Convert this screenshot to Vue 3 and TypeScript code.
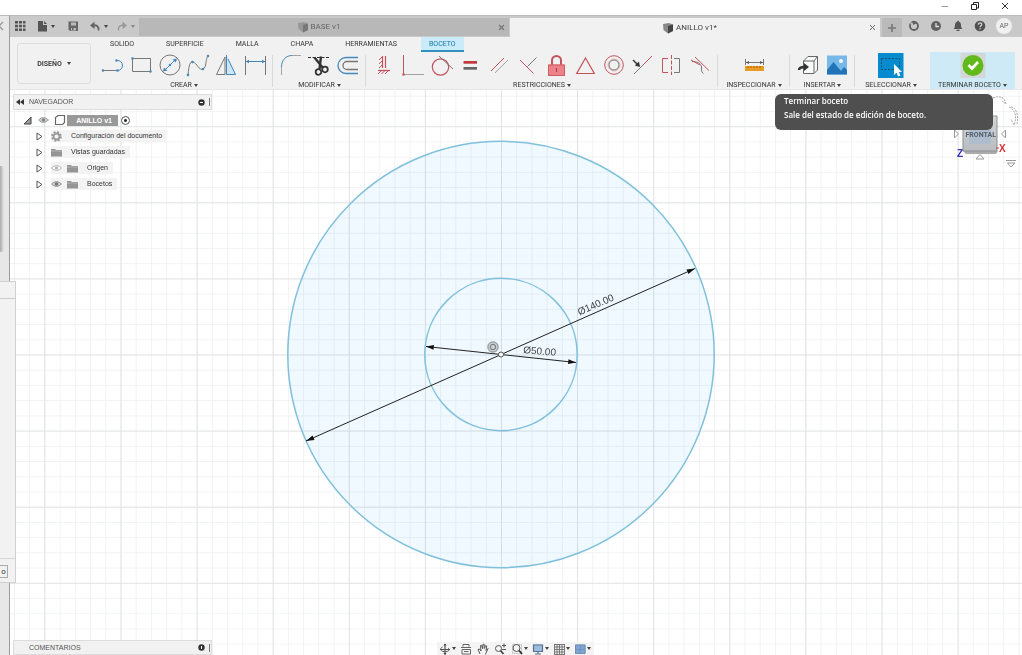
<script setup lang="ts">
import { ref } from 'vue'

interface Shape { d: string; s?: string; f?: string; w?: number; dash?: string }
interface Tool { name: string; shapes: Shape[] }
interface Group { id: string; label: string; tools: Tool[] }

const RED = '#c4525b'
const BLUE = '#4488bd'
const GREY = '#777'
const LIGHT = '#a3a3a3'
const DARK = '#333'

const disc = (x: number, y: number, r: number): string =>
  `M${x - r} ${y}a${r} ${r} 0 1 0 ${2 * r} 0a${r} ${r} 0 1 0 ${-2 * r} 0z`
const line = (d: string, s: string, w = 1, dash?: string): Shape => ({ d, s, w, dash })
const fill = (d: string, f: string): Shape => ({ d, f })
const dot = (x: number, y: number, f = BLUE): Shape => fill(disc(x, y, 1.3), f)
const ring = (x: number, y: number, r: number, s: string, w = 1): Shape => line(disc(x, y, r), s, w)

const groups: Group[] = [
  {
    id: 'crear', label: 'CREAR', tools: [
      { name: 'Línea', shapes: [line('M2 17.5H17', GREY), line('M17 17.5A5 5 0 0 0 16 7.5', BLUE), dot(2, 17.5), dot(16.5, 17.5), dot(15.5, 7.5)] },
      { name: 'Rectángulo', shapes: [line('M3 5.5H21.5V18.5H3.5V5', GREY), dot(3.5, 5.5), dot(21.5, 18.5)] },
      { name: 'Círculo', shapes: [ring(12, 12, 10, GREY), line('M7 17L17 7', BLUE), dot(12, 12), fill('M5 18.5L6 14.5L9.5 17.5zM19 5.5L17.8 9.5L14.5 6.5z', BLUE)] },
      { name: 'Spline', shapes: [line('M2 22C3 12 4 8 7 9C11 10 13 18 17 16C21 14 19 7 22 3', GREY), dot(2, 22), dot(6.5, 9), dot(17, 16), dot(22, 3)] },
      { name: 'Simetría', shapes: [fill('M13 3L22 21.5H13z', '#cfe5f5'), line('M11 4V21.5H2.5z', GREY), line('M14 6L21.5 21.5H12', BLUE), line('M12.5 2V22', BLUE)] },
      { name: 'Cota', shapes: [line('M2.5 3V22M22.5 3V22', GREY), line('M3 8.5H22', BLUE), fill('M2.5 8.5L6 6.8V10.2zM22.5 8.5L19 6.8V10.2z', BLUE)] },
    ],
  },
  {
    id: 'modificar', label: 'MODIFICAR', tools: [
      { name: 'Empalme', shapes: [line('M2.5 22V14M13 2.5H22', LIGHT), line('M2.5 14C2.5 7 7 2.5 13 2.5', BLUE)] },
      { name: 'Recortar', shapes: [line('M1 4.5H23', DARK, 1, '3 1.5'), line('M7.5 4.5L16 15M14 3.5L12.5 16', DARK, 2.4), ring(11.5, 19, 2.8, DARK, 1.8), ring(18, 16.5, 2.8, DARK, 1.8)] },
      { name: 'Desfase', shapes: [line('M22 4.5H10A7.5 7.5 0 0 0 10 20.5H22', BLUE, 1.3), line('M22 8.5H11A4 4 0 0 0 11 16.5H22', GREY, 1.3)] },
    ],
  },
  {
    id: 'restricciones', label: 'RESTRICCIONES', tools: [
      { name: 'Horizontal/Vertical', shapes: [line('M13.5 3V15M10.5 3V15', RED, 1.2), line('M7 7L10 4M7 11L10 8M7 15L10 12', RED), line('M6 17.5H18', RED, 1.3), line('M6 21L9 18M9.5 21L12.5 18M13 21L16 18', RED)] },
      { name: 'Coincidente', shapes: [line('M2.5 2V22', RED), line('M3 21.5H23', LIGHT), dot(2.5, 21.5, RED)] },
      { name: 'Tangente', shapes: [ring(10.5, 14, 8.2, RED, 1.2), line('M9 3L23 16', GREY)] },
      { name: 'Igual', shapes: [fill('M5.5 8H19V10.7H5.5z', '#c23a40'), fill('M5.5 14H19V16.7H5.5z', '#666')] },
      { name: 'Paralelo', shapes: [line('M4 18L17 5', RED), line('M8 20L21 7', LIGHT)] },
      { name: 'Perpendicular', shapes: [line('M4 7L17.5 20.5', RED), line('M20.5 4.5L11.5 13.5', GREY)] },
      { name: 'Fijar', shapes: [line('M8 12V7.5a4.5 4.5 0 0 1 9 0V12', '#c2535a', 2), fill('M4 11.5H21V23H4z', '#ec8288'), line('M4.5 12H20.5V22.5H4.5z', '#cf5a62'), line('M12.5 15V19', '#a7373f')] },
      { name: 'Punto medio', shapes: [line('M12.5 5L21.3 20.5H3.7z', RED, 1.2)] },
      { name: 'Concéntrico', shapes: [ring(12, 12, 9.3, RED), ring(12, 12, 5, GREY), ring(12, 12, 6, '#d58b92', 0.6)] },
      { name: 'Colineal', shapes: [line('M4 21L13 12', GREY), line('M13 12L22 3', RED), line('M3 7L8 12', DARK, 1.4), fill('M10 14L9 8.5L4.8 12.5z', DARK)] },
      { name: 'Simétrica', shapes: [line('M9 5.5H3.5V19.5H9', RED), line('M12.5 2V22', RED, 1, '4 1.5'), line('M15 5.5H20.5V19.5H15', GREY)] },
      { name: 'Curvatura', shapes: [line('M7 4L21 17.5', RED), line('M4 8.5C9 8.5 13 10 13.5 14C13.5 17 13 19 15.5 20.5', GREY), line('M3 7L12 12', RED)] },
    ],
  },
  {
    id: 'inspeccionar', label: 'INSPECCIONAR', tools: [
      { name: 'Medir', shapes: [line('M3.5 6V12M21.5 6V12M4 9.5H21', '#777'), fill('M4 9.5L7 8V11zM21 9.5L18 8V11z', '#555'), fill('M3 13H22V18H3z', '#e79c25'), line('M6 13V15M9 13V15M12 13V15M15 13V15M18 13V15', '#a96905')] },
    ],
  },
  {
    id: 'insertar', label: 'INSERTAR', tools: [
      { name: 'Insertar derivada', shapes: [fill('M7 8L12 3H22V17L18 21H7z', '#f8f9fb'), line('M7.5 8L12 3.5H21.5V17L18 20.5H7.5zM7.5 8H18V20M18 8L21.5 3.5', '#666'), line('M3 17C3 14.5 5 14 9 14', DARK, 2.5), fill('M8 10L13 14L8 18z', DARK)] },
      { name: 'Insertar imagen', shapes: [fill('M2 2.5H22V21.5H2z', '#76b8e8'), fill('M2 17L8.5 9L16 18L19 14L22 17V21.5H2z', '#2273b8'), fill(disc(16, 8, 2), '#f2faff')] },
    ],
  },
  {
    id: 'seleccionar', label: 'SELECCIONAR', tools: [
      { name: 'Seleccionar', shapes: [fill('M-1 0H24.5V25H-1z', '#078bcf'), line('M2.5 5.5H20.5V16.5H2.5z', '#164f70', 1, '2 1.5'), fill('M15 11V22L17.5 19.8L19.2 23.5L21.5 22.5L19.8 19H23z', '#fff')] },
    ],
  },
  {
    id: 'terminar', label: 'TERMINAR BOCETO', tools: [
      { name: 'Terminar boceto', shapes: [fill('M-.5 0H24.5V25H-.5z', '#d2d7d7'), fill(disc(12, 12.5, 10.5), '#62b91c'), line('M7.5 12L11 15.5L17 9', '#fff', 2.6)] },
    ],
  },
]

const ribbonTabs = ['SOLIDO', 'SUPERFICIE', 'MALLA', 'CHAPA', 'HERRAMIENTAS', 'BOCETO']
const activeTab = ref('BOCETO')

interface Node { label: string; icon: 'gear' | 'folder'; eye?: 'on' | 'off' }
const nodes: Node[] = [
  { label: 'Configuración del documento', icon: 'gear' },
  { label: 'Vistas guardadas', icon: 'folder' },
  { label: 'Origen', icon: 'folder', eye: 'off' },
  { label: 'Bocetos', icon: 'folder', eye: 'on' },
]

const quick: { name: string; caret: boolean; faded?: boolean; shapes: Shape[] }[] = [
  { name: 'Panel de datos', caret: false, shapes: [fill('M1 1h3v2.6H1zM5 1h3v2.6H5zM9 1h2.500v2.6H9zM1 4.700h3v2.6H1zM5 4.700h3v2.6H5zM9 4.700h2.500v2.6H9zM1 8.400h3v2.600H1zM5 8.400h3v2.600H5zM9 8.400h2.500v2.600H9z', '#555')] },
  { name: 'Archivo', caret: true, shapes: [fill('M2 1H7V5H11V11.5H2z', '#555'), fill('M8 1L11 4H8z', '#555')] },
  { name: 'Guardar', caret: false, shapes: [fill('M2 1.5H11V11H3L1.5 9.5V1.5z', '#666'), fill('M4 2.5H9V5.5H4zM4 8H9V10.5H4z', '#bbb'), fill('M5 8H6.5V10H5z', '#666')] },
  { name: 'Deshacer', caret: true, shapes: [fill('M1 5.5L5.5 1.5V9z', '#666'), line('M4 5.3C8 5 10 6.5 9.5 10.5', '#666', 1.8)] },
  { name: 'Rehacer', caret: true, faded: true, shapes: [fill('M11 5.5L6.5 1.5V9z', '#999'), line('M8 5.3C4 5 2 6.5 2.5 10.5', '#999', 1.4)] },
]

const status: { name: string; shapes: Shape[] }[] = [
  { name: 'Extensiones', shapes: [ring(6, 6, 4, '#606060', 1.8), fill('M5 0.5L9 3L5 5z', '#606060'), fill('M2 2L5 3L3 5z', '#c8c8c8')] },
  { name: 'Estado de trabajos', shapes: [fill(disc(6, 6, 5), '#606060'), line('M6 3V6.5H9', '#ddd', 1.3)] },
  { name: 'Notificaciones', shapes: [fill('M1.5 9C3 8 3 6 3 4.5C3.3 2.5 4.5 2 5.2 1.8V.8H6.8V1.8C8 2 8.8 3 9 4.5C9 6 9 8 10.5 9zM4.5 9.7H7.5V11H4.5z', '#555')] },
  { name: 'Ayuda', shapes: [fill(disc(6, 6, 5.3), '#505050'), line('M4.2 4.7C4.2 2.3 7.8 2.3 7.8 4.5C7.8 5.7 6 5.8 6 7.3M6 8.2V9.5', '#ddd', 1.2)] },
]

const views: { name: string; caret: boolean; shapes: Shape[] }[] = [
  { name: 'Órbita', caret: true, shapes: [line('M6 1V11.5M1 6.5H11', '#555', 1.2), line('M3.5 4C1 5 1 8 5 8.7C9 9 12 7 9 5', '#555'), fill('M4.5 2.5L6 .5L7.5 2.5zM4.5 10L6 12L7.5 10z', '#444')] },
  { name: 'Mirar a', caret: false, shapes: [line('M3 3.5V1.5H9V3.5M1 4.5H11M2 6.5H10.5V11H2zM4 8.5H8.5', '#666')] },
  { name: 'Encuadre', caret: false, shapes: [line('M3 11L1 6.5L2.5 6L4 8L3.5 2.5L4.7 2.3L5.5 5.5L6 1.2L7.2 1.3L7.3 5.5L8.7 2.5L9.7 3L9 7.5L11 5.5L9 10L8.5 11.5', '#555')] },
  { name: 'Zoom', caret: false, shapes: [ring(4.5, 5.5, 3, '#555'), line('M6.5 7.5L9.5 11', '#444', 1.8), line('M8 2.5H12M10 .5V4.5M8 6.5H12', '#555')] },
  { name: 'Ajustar', caret: true, shapes: [line('M1.5 1.5H10.5V10.5H1.5z', '#bbb', 1, '2 1'), ring(5.5, 5, 3.5, '#555'), line('M8 7.5L11 11', '#333', 1.8)] },
  { name: 'Visualización', caret: true, shapes: [fill('M1 1.5H11V8.5H1z', '#9dbce2'), line('M1.5 2H10.5V8.5H1.5zM3 11H9M6 9V11', '#5d708c', 1.2)] },
  { name: 'Rejilla', caret: true, shapes: [line('M1.5 1V11.5M4 1V11.5M6.5 1V11.5M9 1V11.5M11.5 1V11.5M1 1.5H12M1 4H12M1 6.5H12M1 9H12M1 11.5H12', '#777')] },
  { name: 'Ventanas gráficas', caret: true, shapes: [fill('M1 1.5H11.5V10.5H1z', '#7fa6d2'), line('M1.5 2H11V10.5H1.5z', '#6f8fb5'), line('M6.2 2V10M1 6.5H11', '#6f94c0')] },
]
</script>

<template>
  <div class="window">
    <header class="titlebar">
      <button aria-label="Minimizar"><svg width="10" height="10"><path d="M1.5 5.5H8" stroke="#999" /></svg></button>
      <button aria-label="Restaurar"><svg width="10" height="10"><path d="M1.500 3.500H6.500V8.500H1.500zM3.500 3V1.500H8.500V7H7" fill="none" stroke="#222" /></svg></button>
      <button aria-label="Cerrar"><svg width="10" height="10"><path d="M2 2L8 8M8 2L2 8" stroke="#333" /></svg></button>
    </header>

    <div class="body">
      <aside class="strip">
        <svg class="back" width="9" height="12"><path d="M3 2L-1 6L3 10" fill="none" stroke="#999" stroke-width="1.3" /></svg>
        <div class="strip-shadow"></div>
      </aside>

      <main class="app">
        <div class="tabbar">
          <div class="quick">
            <button v-for="q in quick" :key="q.name" :aria-label="q.name" :class="{ faded: q.faded }">
              <svg width="12" height="12">
                <path v-for="(p, i) in q.shapes" :key="i" :d="p.d" :fill="p.f ?? 'none'" :stroke="p.s" :stroke-width="p.w" />
              </svg>
              <i v-if="q.caret" class="caret"></i>
            </button>
          </div>
          <div class="doc">
            <svg width="12" height="12"><path d="M1 2L7 1L11 2.5V9L6 11.5L1.5 8z" fill="#989898" /><path d="M6 4L11 2.5V9L6 11.5z" fill="#777" /></svg>
            <span>BASE v1</span>
            <button class="close" aria-label="Cerrar BASE"><svg width="7" height="7"><path d="M1 1L6 6M6 1L1 6" stroke="#777" stroke-width="1.2" /></svg></button>
          </div>
          <div class="doc current">
            <svg width="12" height="12"><path d="M1 2L7 1L11 2.5V9L6 11.5L1.5 8z" fill="#888" /><path d="M6 4L11 2.5V9L6 11.5z" fill="#444" /></svg>
            <span>ANILLO v1*</span>
            <button class="close" aria-label="Cerrar ANILLO"><svg width="7" height="7"><path d="M1 1L6 6M6 1L1 6" stroke="#666" /></svg></button>
          </div>
          <button class="plus" aria-label="Nuevo diseño"><svg width="10" height="10"><path d="M5 1V9M1 5H9" stroke="#777" stroke-width="1.6" /></svg></button>
          <div class="status">
            <button v-for="s in status" :key="s.name" :aria-label="s.name">
              <svg width="12" height="12"><path v-for="(p, i) in s.shapes" :key="i" :d="p.d" :fill="p.f ?? 'none'" :stroke="p.s" :stroke-width="p.w" /></svg>
            </button>
            <button class="avatar">AP</button>
          </div>
        </div>

        <div class="ribbon">
          <button class="workspace">DISEÑO <i class="caret"></i></button>
          <div class="ribbon-main">
            <nav class="ribbon-tabs">
              <button v-for="t in ribbonTabs" :key="t" :class="{ active: t === activeTab }" @click="activeTab = t">{{ t }}</button>
            </nav>
            <div class="groups">
              <section v-for="g in groups" :key="g.id" class="group" :class="g.id">
                <div class="tools">
                  <button v-for="t in g.tools" :key="t.name" :aria-label="t.name">
                    <svg width="24" height="24" viewBox="0 0 24 24">
                      <path v-for="(p, i) in t.shapes" :key="i" :d="p.d" :fill="p.f ?? 'none'" :stroke="p.s" :stroke-width="p.w" :stroke-dasharray="p.dash" />
                    </svg>
                  </button>
                </div>
                <button class="menu">{{ g.label }}<i class="caret"></i></button>
              </section>
            </div>
          </div>
        </div>

        <div class="canvas">
          <svg class="sketch" viewBox="10 90 1012 565" preserveAspectRatio="xMidYMid slice">
            <defs>
              <pattern id="minor" x="501" y="354.5" width="15.22" height="15.22" patternUnits="userSpaceOnUse">
                <path d="M0 0V15.22M0 0H15.22" stroke="#eef0f1" fill="none" stroke-width="1.6" />
              </pattern>
              <pattern id="major" x="501" y="354.5" width="76.1" height="76.1" patternUnits="userSpaceOnUse">
                <path d="M0 0V76.1M0 0H76.1" stroke="#dee0e2" fill="none" stroke-width="1.7" />
              </pattern>
            </defs>
            <rect x="10" y="90" width="1012" height="565" fill="#fff" />
            <circle cx="501" cy="354.5" r="213.2" fill="#eff9ff" />
            <g class="grid">
              <rect x="10" y="90" width="1012" height="565" fill="url(#minor)" />
              <rect x="10" y="90" width="1012" height="565" fill="url(#major)" />
            </g>
            <g fill="none" stroke="#80c0dc" stroke-width="1.5">
              <circle cx="501" cy="354.5" r="213.2" />
              <circle cx="501" cy="354.5" r="76.2" />
            </g>
            <path d="M306 441L695 268.500M426 346.500L576 362.500" stroke="#222" />
            <path d="M306 441L312.500 435.500L314.500 440zM695 268.500L688.500 274L686.500 269.500zM426 346.500L434 345L433.500 349.700zM576 362.500L568 364L568.500 359.300z" fill="#111" />
            <circle cx="493" cy="347" r="6" fill="#c9d0d3" />
            <circle cx="493" cy="347" r="5" fill="none" stroke="#888" stroke-width=".8" />
            <circle cx="493" cy="347" r="2.700" fill="none" stroke="#777" />
            <circle cx="501" cy="354.500" r="2.500" fill="#fff" stroke="#555" />
            <text class="dim" transform="translate(579.500 315.500) rotate(-24)">Ø140.00</text>
            <text class="dim" transform="translate(523 353) rotate(5)">Ø50.00</text>
          </svg>

          <section class="browser">
            <header class="panel-head">
              <svg width="8" height="6"><path d="M4 0V6L0 3zM8 0V6L4 3z" fill="#333" /></svg>
              <span>NAVEGADOR</span>
              <button aria-label="Contraer"><svg width="7" height="7"><circle cx="3.500" cy="3.500" r="3.200" fill="#333" /><path d="M2 3.500H5" stroke="#fff" /></svg></button>
              <i class="grip"></i>
            </header>
            <ul class="tree">
              <li class="root">
                <svg width="9" height="9"><path d="M8 1V8H1z" fill="#999" stroke="#444" /></svg>
                <svg class="eye" width="11" height="8"><path d="M.5 4Q5.500-1 10.500 4Q5.500 9 .5 4z" fill="#ccc" stroke="#a5a5a5" /><circle cx="5.500" cy="4" r="1.800" fill="#888" /></svg>
                <svg class="cube" width="12" height="12"><path d="M1.500 3.500L4 1.500H10.500V8.500L8.500 10.500H1.500z" fill="#fff" stroke="#666" stroke-width="1.200" /></svg>
                <span class="name">ANILLO v1</span>
                <input type="radio" checked aria-label="Activar componente" />
              </li>
              <li v-for="n in nodes" :key="n.label">
                <svg class="twist" width="7" height="9"><path d="M1 1V8L6 4.500z" fill="#fff" stroke="#555" /></svg>
                <div class="node">
                  <svg v-if="n.eye" class="eye" width="11" height="8"><path d="M.5 4Q5.500-1 10.500 4Q5.500 9 .5 4z" :fill="n.eye === 'on' ? '#ccc' : '#fff'" :stroke="n.eye === 'on' ? '#999' : '#bbb'" /><circle cx="5.500" cy="4" r="1.800" :fill="n.eye === 'on' ? '#777' : '#bbb'" /></svg>
                  <svg v-if="n.icon === 'folder'" width="11" height="9"><path d="M0 1H4L5 2H11V8.500H0z" fill="#959595" /><path d="M0 3H11" stroke="#b5b5b5" /></svg>
                  <svg v-else width="11" height="11"><circle cx="5.500" cy="5.500" r="4.300" fill="none" stroke="#999" stroke-width="2" stroke-dasharray="1.900 1.480" /><circle cx="5.500" cy="5.500" r="3" fill="none" stroke="#999" stroke-width="1.800" /></svg>
                  <span>{{ n.label }}</span>
                </div>
              </li>
            </ul>
          </section>

          <svg class="viewcube" width="72" height="80" viewBox="0 0 72 80">
            <defs>
              <linearGradient id="face" x2="0" y2="1"><stop offset="0" stop-color="#d4d6d8" /><stop offset="1" stop-color="#b9bcc0" /></linearGradient>
            </defs>
            <path d="M13 61L48 61L46 64H16z" fill="#aaa" />
            <path d="M13 26H47V61H13z" fill="url(#face)" stroke="#8e9092" />
            <path d="M19 40H41V54H19z" fill="#aebccb" />
            <text x="15.500" y="47" class="face">FRONTAL</text>
            <path d="M4.500 40V48L8.500 44zM55.500 40V48L51.500 44zM26 69L30 64.500L34 69zM56 70.500H66M57.500 73H65L61 77z" fill="#fff" stroke="#999" />
            <path d="M43 8C51 5 55 8 56 14L52 11M59 17C66 20 67 28 64 35L61 29M61 17C66 17 69 26 67 34" fill="none" stroke="#aaa" stroke-dasharray="2 1" />
            <text x="7" y="67" class="axis z">Z</text>
            <text x="49" y="62" class="axis x">X</text>
            <path d="M46 58H49" stroke="#d33" />
          </svg>
          <div class="tooltip" role="tooltip">
            <p>Terminar boceto</p>
            <p>Sale del estado de edición de boceto.</p>
          </div>

          <footer class="bottom">
            <div class="panel-head comments">
              <span>COMENTARIOS</span>
              <button aria-label="Añadir comentario"><svg width="7" height="7"><circle cx="3.500" cy="3.500" r="3.200" fill="#333" /><path d="M3.500 2V5" stroke="#fff" /></svg></button>
              <i class="grip"></i>
            </div>
            <div class="views">
              <button v-for="v in views" :key="v.name" :aria-label="v.name">
                <svg width="13" height="12"><path v-for="(p, i) in v.shapes" :key="i" :d="p.d" :fill="p.f ?? 'none'" :stroke="p.s" :stroke-width="p.w" :stroke-dasharray="p.dash" /></svg>
                <i v-if="v.caret" class="caret"></i>
              </button>
            </div>
          </footer>
        </div>
      </main>
      <aside class="behind"><div class="behind-foot"><button>o</button></div></aside>
    </div>
  </div>
</template>

<style>
body { margin: 0; }
</style>

<style scoped>
* { box-sizing: border-box; }
.window { height: 100vh; display: flex; flex-direction: column; overflow: hidden; background: #fff; color: #333; font: 7px/10px Roboto, sans-serif; }
button { border: 0; padding: 0; margin: 0; background: none; color: inherit; font: inherit; display: flex; align-items: center; justify-content: center; }
svg { display: block; flex: none; }
.caret { flex: none; border: 2px solid transparent; border-top: 3px solid #444; border-bottom: 0; }
.titlebar { height: 15px; flex: none; display: flex; align-items: flex-start; justify-content: flex-end; gap: 20px; padding: 1px 12px 0 0; }
.titlebar button { width: 10px; }
.body { flex: 1; min-height: 0; display: flex; position: relative; }
.strip { width: 10px; flex: none; background: #e7e7e7; border-right: 1px solid #9b9b9b; border-top: 1px solid #bbb; }
.back { margin-top: 4px; }
.strip-shadow { width: 4px; height: 86px; margin-top: 134px; border-radius: 0 3px 3px 0; background: linear-gradient(90deg, #aaa, #e7e7e7); }
.behind { position: absolute; left: 0; top: 266px; width: 16px; height: 302px; background: #f2f2f2; border: 1px solid #d0d0d0; border-left: 0; display: flex; flex-direction: column; justify-content: space-between; }
.behind::before { content: ''; height: 16px; border-bottom: 1px solid #ccc; }
.behind-foot { border-top: 1px solid #d8d8d8; height: 24px; padding-top: 6px; }
.behind-foot button { width: 8px; height: 13px; border: 1px solid #aaa; border-left: 0; font-size: 8px; }
.app { flex: 1; min-width: 0; display: flex; flex-direction: column; }

.tabbar { height: 22px; flex: none; display: flex; background: #c9c9c9; border-top: 1px solid #bbb; padding-top: 2px; }
.quick { width: 129px; display: flex; align-items: center; gap: 10px; padding: 0 0 3px 4px; }
.quick button { gap: 3px; }
.quick button:nth-child(2) { margin-right: 2px; }
.quick button:nth-child(5) { margin-left: -2px; }
.quick .faded .caret { border-top-color: #888; }
.doc { flex: 1; position: relative; display: flex; align-items: center; justify-content: center; gap: 2px; background: #b8b8b8; color: #666; font-size: 8px; margin-bottom: 1px; padding-right: 11px; }
.doc.current { background: #f1f1f1; color: #444; margin: 0 0 0 1px; }
.doc .close { position: absolute; right: 4px; top: 6px; }
.plus { width: 20px; margin: 0 0 0 2px; background: #bababa; }
.status { width: 120px; display: flex; align-items: center; gap: 10px; padding: 0 0 3px 6px; }
.avatar { width: 16px; height: 16px; border-radius: 8px; background: #f0f0f0; color: #666; }

.ribbon { flex: none; display: flex; background: #f1f1f1; padding-left: 7px; border-bottom: 1px solid #e6e6e6; }
.workspace { width: 74px; height: 41px; margin-top: 6px; border: 1px solid #dcdcdc; border-radius: 3px; gap: 5px; font-weight: 600; }
.ribbon-main { flex: 1; margin-left: 4px; }
.ribbon-tabs { display: flex; gap: 16px; height: 15px; padding-left: 7px; }
.ribbon-tabs button { padding: 0 8px; border-bottom: 2px solid transparent; }
.ribbon-tabs .active { background: #c9ebfa; border-color: #338fbd; color: #1677a5; }
.groups { display: flex; }
.group { display: flex; flex-direction: column; align-items: center; height: 37px; padding: 1px 4px 0; background: linear-gradient(#dadada, #dadada) right 3px / 1px 32px no-repeat; }
.tools { display: flex; align-self: stretch; }
.tools button { flex: 1 1 0; min-width: 0; }
.tools svg { overflow: visible; }
.menu { gap: 2px; margin-top: 2px; padding-top: 1px; white-space: nowrap; }
.crear { width: 178px; }
.modificar { width: 93px; }
.restricciones { width: 352px; }
.inspeccionar { width: 72px; }
.insertar { width: 65px; }
.seleccionar { width: 72px; background: none; }
.terminar { width: 85px; margin-left: 3px; background: #cdeaf6; }

.canvas { flex: 1; min-height: 0; position: relative; display: flex; flex-direction: column; justify-content: space-between; }
.sketch { position: absolute; inset: 0; width: 100%; height: 100%; }
.grid { mix-blend-mode: multiply; }
.dim { font: 10px "Liberation Sans", Arial, sans-serif; fill: #444; }
.browser { position: relative; width: 199px; margin: 4px 0 0 3px; font-family: "Liberation Sans", Arial, sans-serif; }
.panel-head { height: 16px; display: flex; align-items: center; background: #f1f1f1; border: 1px solid #dcdcdc; padding: 0 0 0 2px; color: #555; font-family: "Liberation Sans", Arial, sans-serif; }
.panel-head span { flex: 1; margin-left: 5px; }
.grip { width: 2px; height: 8px; margin-left: 4px; border-left: 1px solid #777; }
.tree { list-style: none; margin: 2px 0 0; padding: 0; }
.tree li { height: 16px; display: flex; align-items: center; padding-left: 23px; }
.tree .root { padding-left: 10px; }
.root .eye { margin-left: 6px; }
.root .cube { margin-left: 5px; }
.name { width: 51px; height: 11px; margin-left: 1px; padding-right: 6px; background: #999; color: #fff; font-weight: bold; line-height: 11px; text-align: right; white-space: nowrap; }
.root input { appearance: none; width: 9px; height: 9px; margin: 0 0 0 3px; border: 1px solid #555; border-radius: 5px; background: radial-gradient(#333 0 1px, #fff 2px); }
.node { display: flex; align-items: center; height: 12px; margin-left: 8px; padding-right: 5px; background: #f3f3f3; }
.node span { margin-left: 9px; white-space: nowrap; }
.node .eye { margin-right: 5px; }
.viewcube { position: absolute; right: 0; top: 0; }
.face { font: bold 7px Roboto, sans-serif; fill: #566270; }
.axis { font: bold 10px "Liberation Sans", Arial, sans-serif; }
.axis.z { fill: #3434b5; }
.axis.x { fill: #d83434; }
.tooltip { position: absolute; top: 4px; right: 29px; width: 218px; height: 36px; border-radius: 6px; background: #4f4f4f; color: #fff; padding: 2px 9px; font: 600 8px/10px "Open Sans", sans-serif; }
.tooltip p { margin: 0 0 4px; white-space: nowrap; }
.bottom { position: relative; display: flex; align-items: flex-end; }
.comments { width: 199px; height: 15px; margin-left: 3px; padding-left: 10px; }
.views { display: flex; align-items: center; height: 13px; margin-left: 225px; padding: 0 3px 0 2px; gap: 4px; background: #f4f4f4; }
</style>
